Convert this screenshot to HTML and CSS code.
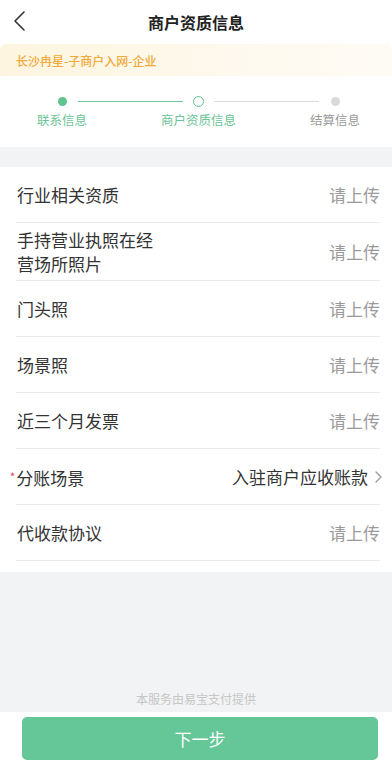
FILE: index.html
```html
<!DOCTYPE html>
<html lang="zh">
<head>
<meta charset="utf-8">
<link rel="stylesheet" href="styles.css">
</head>
<body>
<div class="page">
  <header class="nav">
    <svg class="back" width="24" height="24" viewBox="0 0 24 24"><path d="M16 3 L7 12 L16 21" fill="none" stroke="#333" stroke-width="1.6" stroke-linecap="round" stroke-linejoin="round"/></svg>
    <h1 class="title">商户资质信息</h1>
  </header>
  <div class="banner">长沙冉星-子商户入网-企业</div>
  <div class="steps">
    <span class="dot done"></span>
    <span class="line line-a active"></span>
    <span class="ring"></span>
    <span class="line line-b"></span>
    <span class="dot todo"></span>
    <span class="label active">联系信息</span>
    <span></span>
    <span class="label active">商户资质信息</span>
    <span></span>
    <span class="label">结算信息</span>
  </div>
  <div class="gap"></div>
  <ul class="list">
    <li class="row"><span class="name">行业相关资质</span><span class="val">请上传</span></li>
    <li class="row tall"><span class="name">手持营业执照在经<br>营场所照片</span><span class="val">请上传</span></li>
    <li class="row"><span class="name">门头照</span><span class="val">请上传</span></li>
    <li class="row"><span class="name">场景照</span><span class="val">请上传</span></li>
    <li class="row"><span class="name">近三个月发票</span><span class="val">请上传</span></li>
    <li class="row"><span class="name"><span class="star">*</span>分账场景</span><span class="val dark">入驻商户应收账款<svg class="chev" width="10" height="14" viewBox="0 0 10 14"><path d="M2 2 L7 7 L2 12" fill="none" stroke="#9a9a9a" stroke-width="1.3" stroke-linecap="round" stroke-linejoin="round"/></svg></span></li>
    <li class="row"><span class="name">代收款协议</span><span class="val">请上传</span></li>
  </ul>
  <div class="filler"><p class="credit">本服务由易宝支付提供</p></div>
  <div class="bottom"><button class="next">下一步</button></div>
</div>
</body>
</html>
```
FILE: styles.css
```css
* { box-sizing: border-box; }
html, body { margin: 0; padding: 0; }
body {
  font-family: "Noto Sans CJK SC", "Noto Sans", sans-serif;
  color: #333;
  background: #fff;
}
.page {
  width: 392px;
  height: 770px;
  display: flex;
  flex-direction: column;
}
.nav {
  height: 44px;
  display: flex;
  align-items: center;
  justify-content: center;
  position: relative;
  background: #fff;
}
.back {
  position: absolute;
  left: 8px;
  top: 9px;
}
.title {
  margin: 0;
  font-size: 16px;
  font-weight: 700;
  color: #222;
}
.banner {
  height: 32px;
  padding: 0 16px;
  display: flex;
  align-items: center;
  font-size: 12px;
  font-weight: 500;
  color: #f1a93a;
  background: linear-gradient(90deg, #fdf5df 0%, #fef9ee 60%, #fefbf5 100%);
  border-radius: 6px 6px 0 0;
}
.steps {
  display: grid;
  grid-template-columns: 50px 1fr 75px 1fr 50px;
  grid-template-rows: 9px 18px;
  row-gap: 5px;
  align-items: center;
  padding: 21px 32px 18px 37px;
}
.dot, .ring {
  justify-self: center;
  border-radius: 50%;
}
.dot { width: 9px; height: 9px; }
.dot.done { background: #5fc28f; }
.dot.todo { background: #d9d9d9; }
.ring {
  width: 11px;
  height: 11px;
  border: 1.5px solid #5fc28f;
  background: #fff;
}
.line {
  height: 1px;
  background: #dcdcdc;
}
.line.active { background: #6cc79a; }
.line-a { margin: 0 -22px 0 -9px; }
.line-b { margin: 0 -9px 0 -22px; }
.label {
  justify-self: center;
  font-size: 12.5px;
  line-height: 18px;
  color: #9a9a9a;
  white-space: nowrap;
}
.label.active { color: #6cc497; }
.gap {
  height: 20px;
  background: #f2f3f5;
}
.list {
  list-style: none;
  margin: 0;
  padding: 0 12px 11px 16px;
  background: #fff;
}
.row {
  height: 56px;
  display: flex;
  align-items: center;
  justify-content: space-between;
  border-bottom: 1px solid #ebebeb;
  font-size: 17px;
}
.row.tall { height: 58px; }
.name {
  color: #333;
  line-height: 24px;
  margin-left: 1px;
}
.star {
  color: #e0364a;
  font-size: 11px;
  margin-left: -7px;
  margin-right: 1px;
  vertical-align: 4px;
}
.val {
  color: #9a9a9a;
  display: flex;
  align-items: center;
}
.val.dark { color: #333; }
.chev { margin-left: 6px; margin-right: -4px; }
.filler {
  flex: 1;
  background: #f2f3f5;
  display: flex;
  align-items: flex-end;
  justify-content: center;
}
.credit {
  margin: 0 0 5px;
  font-size: 12px;
  line-height: 17px;
  color: #c6c6c6;
}
.bottom {
  padding: 5px 14px 10px 22px;
  background: #fff;
}
.next {
  display: block;
  width: 100%;
  height: 43px;
  border: 0;
  border-radius: 5px;
  background: #65c797;
  color: #fff;
  font-family: inherit;
  font-size: 17px;
}
```
